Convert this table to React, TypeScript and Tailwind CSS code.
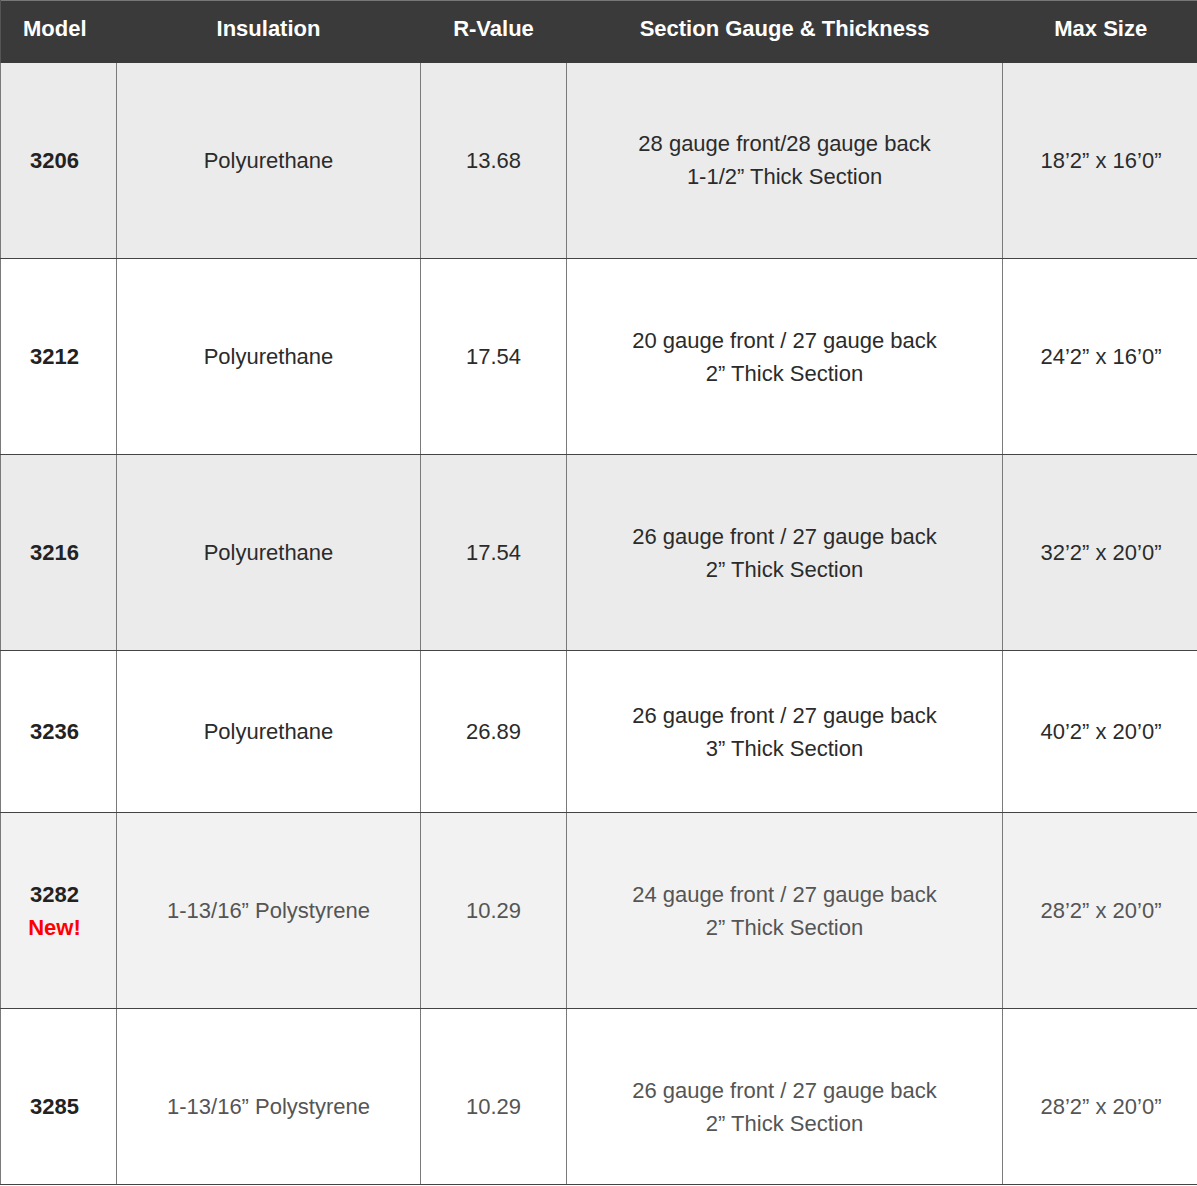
// Garage door model spec table

const font = "font-['Liberation_Sans',Arial,sans-serif]";

interface Row {
  model: string;
  isNew?: boolean;
  insulation: string;
  rValue: string;
  gauge: string;
  thickness: string;
  maxSize: string;
  height: string;
  bg: string;
  text: string;
  pad?: string;
}

const rows: Row[] = [
  { model: "3206", insulation: "Polyurethane", rValue: "13.68", gauge: "28 gauge front/28 gauge back", thickness: "1-1/2” Thick Section", maxSize: "18’2” x 16’0”", height: "h-[196px]", bg: "bg-[#ebebeb]", text: "text-[#2b2b2b]" },
  { model: "3212", insulation: "Polyurethane", rValue: "17.54", gauge: "20 gauge front / 27 gauge back", thickness: "2” Thick Section", maxSize: "24’2” x 16’0”", height: "h-[196px]", bg: "bg-white", text: "text-[#2b2b2b]" },
  { model: "3216", insulation: "Polyurethane", rValue: "17.54", gauge: "26 gauge front / 27 gauge back", thickness: "2” Thick Section", maxSize: "32’2” x 20’0”", height: "h-[196px]", bg: "bg-[#ebebeb]", text: "text-[#2b2b2b]" },
  { model: "3236", insulation: "Polyurethane", rValue: "26.89", gauge: "26 gauge front / 27 gauge back", thickness: "3” Thick Section", maxSize: "40’2” x 20’0”", height: "h-[162px]", bg: "bg-white", text: "text-[#2b2b2b]" },
  { model: "3282", isNew: true, insulation: "1-13/16” Polystyrene", rValue: "10.29", gauge: "24 gauge front / 27 gauge back", thickness: "2” Thick Section", maxSize: "28’2” x 20’0”", height: "h-[196px]", bg: "bg-[#f2f2f2]", text: "text-[#555]" },
  // last row is taller than what fits; text sits lower
  { model: "3285", insulation: "1-13/16” Polystyrene", rValue: "10.29", gauge: "26 gauge front / 27 gauge back", thickness: "2” Thick Section", maxSize: "28’2” x 20’0”", height: "h-[176px]", bg: "bg-white", text: "text-[#555]", pad: "pt-[20px]" },
];

const cell = "border-x border-b border-x-[#7a7a7a] border-b-[#444] text-center align-middle";

export default function App() {
  return (
    <div className={`w-[1197px] bg-white ${font} text-[22px] leading-[33px]`}>
      <table className="w-[1197px] table-fixed border-collapse">
        <colgroup>
          <col className="w-[116px]" />
          <col className="w-[304px]" />
          <col className="w-[146px]" />
          <col className="w-[436px]" />
          <col className="w-[195px]" />
        </colgroup>
        <thead>
          <tr className="h-[62px] bg-[#3a3a3a] text-white border-t border-t-[#777]">
            <th className="border-l border-l-[#555] font-bold pr-[8px] pb-[6px]">Model</th>
            <th className="font-bold pb-[6px]">Insulation</th>
            <th className="font-bold pb-[6px]">R-Value</th>
            <th className="font-bold pb-[6px]">Section Gauge &amp; Thickness</th>
            <th className="border-r border-r-[#555] font-bold pl-[2px] pb-[6px]">Max Size</th>
          </tr>
        </thead>
        <tbody>
          {rows.map((r) => (
            <tr key={r.model} className={`${r.height} ${r.bg} ${r.text}`}>
              <td className={`${cell} ${r.pad ?? "pt-0"} font-bold text-[#222] pr-[8px]`}>
                <div>{r.model}</div>
                {r.isNew && <div className="text-[#ff0000]">New!</div>}
              </td>
              <td className={`${cell} ${r.pad ?? "pt-0"}`}>{r.insulation}</td>
              <td className={`${cell} ${r.pad ?? "pt-0"}`}>{r.rValue}</td>
              <td className={`${cell} ${r.pad ?? "pt-0"}`}>
                <div>{r.gauge}</div>
                <div>{r.thickness}</div>
              </td>
              <td className={`${cell} ${r.pad ?? "pt-0"} pl-[2px]`}>{r.maxSize}</td>
            </tr>
          ))}
        </tbody>
      </table>
    </div>
  );
}
